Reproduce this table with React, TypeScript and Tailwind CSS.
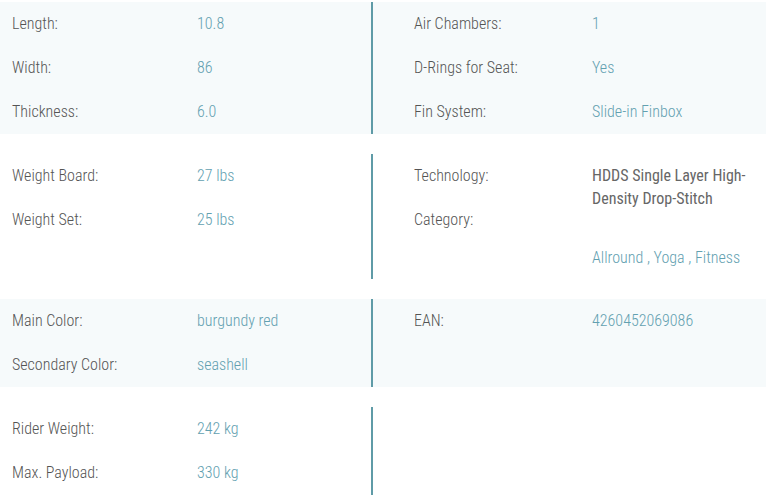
import React from 'react';

type Spec = [string, string];

const Row = ({ label, value, labelW }: { label: string; value: string; labelW: string }) => (
  <div className="flex h-[44px] items-center">
    <div className={`${labelW} shrink-0 text-[#545454]`}>{label}</div>
    <div className="text-[#62a0b0]">{value}</div>
  </div>
);

const Block = ({ left, right, shaded, children }: { left: Spec[]; right?: Spec[]; shaded?: boolean; children?: React.ReactNode }) => (
  <div className={`flex ${shaded ? 'bg-[#f6fafb]' : 'bg-white'}`}>
    <div className="w-[371px] shrink-0 pl-3">
      {left.map(([l, v]) => (
        <Row key={l} label={l} value={v} labelW="w-[185px]" />
      ))}
    </div>
    <div className="flex-1 border-l-2 border-[#5f9ba7] pl-[41px]">
      {children ??
        right?.map(([l, v]) => <Row key={l} label={l} value={v} labelW="w-[178px]" />)}
    </div>
  </div>
);

export default function App() {
  return (
    <div
      className="w-[766px] bg-white pt-[2px] text-[16px] font-light"
      style={{ fontFamily: "'Roboto Condensed', Roboto, sans-serif" }}
    >
      <div className="flex flex-col gap-5">
        <Block
          shaded
          left={[
            ['Length:', '10.8'],
            ['Width:', '86'],
            ['Thickness:', '6.0'],
          ]}
          right={[
            ['Air Chambers:', '1'],
            ['D-Rings for Seat:', 'Yes'],
            ['Fin System:', 'Slide-in Finbox'],
          ]}
        />

        <Block
          left={[
            ['Weight Board:', '27 lbs'],
            ['Weight Set:', '25 lbs'],
          ]}
        >
          <div className="flex">
            <div className="w-[178px] shrink-0 text-[#545454]">
              <div className="flex h-[44px] items-center">Technology:</div>
              <div className="flex h-[44px] items-center">Category:</div>
            </div>
            <div className="flex-1 pr-2">
              <div className="pt-[10px] pb-[12px] font-normal leading-[23px] text-[#666666]">
                HDDS Single Layer High-Density Drop-Stitch
              </div>
              <div className="pt-[24px] pb-[10px] leading-[23px] text-[#62a0b0]">
                Allround , Yoga , Fitness
              </div>
            </div>
          </div>
        </Block>

        <Block
          shaded
          left={[
            ['Main Color:', 'burgundy red'],
            ['Secondary Color:', 'seashell'],
          ]}
          right={[['EAN:', '4260452069086']]}
        />

        <Block
          left={[
            ['Rider Weight:', '242 kg'],
            ['Max. Payload:', '330 kg'],
          ]}
          right={[]}
        />
      </div>
    </div>
  );
}
